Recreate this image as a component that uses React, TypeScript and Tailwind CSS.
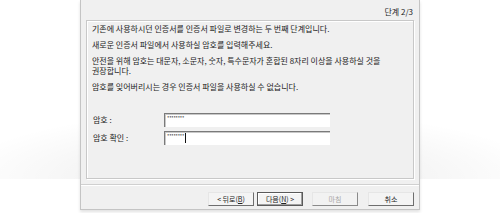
import React from "react";

const FONT = "font-['Noto_Sans_CJK_KR','Noto_Sans',sans-serif]";

function Mnemonic({ label, letter, suffix }: { label: string; letter: string; suffix?: string }) {
  return (
    <>
      {label}(<span className="underline underline-offset-1">{letter}</span>){suffix}
    </>
  );
}

function WizardButton({
  children,
  isDefault,
  disabled,
}: {
  children: React.ReactNode;
  isDefault?: boolean;
  disabled?: boolean;
}) {
  return (
    <div
      className={
        isDefault
          ? "flex h-[14px] w-[46px] items-center justify-center border border-[#5a5a5a] bg-[#f4f4f4] text-[7px] leading-none text-[#222] shadow-[inset_-1px_-1px_0_#a0a0a0,inset_1px_1px_0_#fff]"
          : disabled
          ? "flex h-[14px] w-[46px] items-center justify-center border-l border-t border-r border-b border-l-[#e6e6e6] border-t-[#e6e6e6] border-r-[#8a8a8a] border-b-[#8a8a8a] bg-[#f2f2f2] text-[7px] leading-none text-[#a8a8a8]"
          : "flex h-[14px] w-[46px] items-center justify-center border-l border-t border-r border-b border-l-[#e6e6e6] border-t-[#e6e6e6] border-r-[#6e6e6e] border-b-[#6e6e6e] bg-[#f4f4f4] text-[7px] leading-none text-[#222]"
      }
    >
      {children}
    </div>
  );
}

function PasswordField({ withCaret }: { withCaret?: boolean }) {
  return (
    <div className="flex h-[14px] w-[166px] items-start border-l border-t border-l-[#7a7a7a] border-t-[#7a7a7a] bg-white pl-[2px] pt-[1px] shadow-[inset_1px_1px_0_#c8c8c8]">
      <span className="text-[5px] leading-[5px] tracking-[-0.2px] text-[#333]">********</span>
      {withCaret && <span className="ml-[1px] h-[10px] w-px bg-[#111]" />}
    </div>
  );
}

export default function App() {
  return (
    <div
      className={`flex h-[213px] w-[500px] justify-center overflow-hidden bg-white bg-[linear-gradient(to_bottom,transparent_179px,#fff_179px),radial-gradient(ellipse_300px_70px_at_50%_179px,rgba(0,0,0,0.09),transparent)] ${FONT}`}
    >
      <div className="flex h-[210px] w-[340px] flex-col border-x border-b border-[#c4c4c4] bg-[#f0f0f0] shadow-[0_2px_3px_rgba(0,0,0,0.12)]">
        {/* Header */}
        <div className="flex h-[20px] items-center justify-end pr-[6px] pt-[3px] text-[8px] text-[#222]">
          단계 2/3
        </div>

        {/* Content panel */}
        <div className="mx-[5px] flex h-[159px] flex-col border border-[#c8c8c8] shadow-[inset_1px_1px_0_#fff,1px_1px_0_#fff] px-[5px] pt-[3px] text-[8px] leading-[10px] text-[#222]">
          <div className="flex flex-col gap-[6px]">
            <p>기존에 사용하시던 인증서를 인증서 파일로 변경하는 두 번째 단계입니다.</p>
            <p>새로운 인증서 파일에서 사용하실 암호를 입력해주세요.</p>
            <p>
              안전을 위해 암호는 대문자, 소문자, 숫자, 특수문자가 혼합된 8자리 이상을 사용하실 것을
              <br />
              권장합니다.
            </p>
            <p>암호를 잊어버리시는 경우 인증서 파일을 사용하실 수 없습니다.</p>
          </div>

          <div className="mt-[21px] flex flex-col gap-[4px]">
            <div className="flex items-center">
              <span className="w-[72px] pl-[1px]">암호 :</span>
              <PasswordField />
            </div>
            <div className="flex items-center">
              <span className="w-[72px] pl-[1px]">암호 확인 :</span>
              <PasswordField withCaret />
            </div>
          </div>
        </div>

        {/* Separator */}
        <div className="mt-[5px] h-[2px] border-t border-[#d0d0d0] border-b border-b-white" />

        {/* Buttons */}
        <div className="mt-[6px] flex justify-end gap-[3px] pr-[5px]">
          <WizardButton>
            &lt; <Mnemonic label="뒤로" letter="B" />
          </WizardButton>
          <WizardButton isDefault>
            <Mnemonic label="다음" letter="N" suffix=" >" />
          </WizardButton>
          <div className="w-[3px]" />
          <WizardButton disabled>마침</WizardButton>
          <div className="w-[4px]" />
          <WizardButton>취소</WizardButton>
        </div>
      </div>
    </div>
  );
}
